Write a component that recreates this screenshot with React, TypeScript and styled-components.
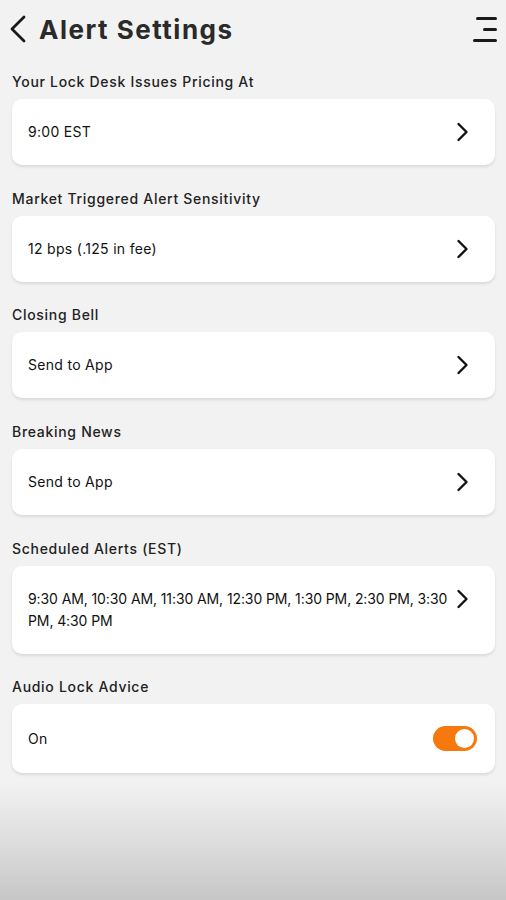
import { useState } from "react";
import styled, { createGlobalStyle } from "styled-components";

const GlobalStyle = createGlobalStyle`
    html, body {
        margin: 0;
        padding: 0;
        background: #f2f2f2;
    }
    body {
        font-family: Inter, "Noto Sans", sans-serif;
        color: #111;
    }
    * {
        box-sizing: border-box;
    }
`;

const Screen = styled.div`
    width: 100%;
    min-height: 100vh;
    display: flex;
    flex-direction: column;
    background: #f2f2f2;
`;

const Header = styled.header`
    display: flex;
    align-items: center;
    justify-content: space-between;
    height: 58px;
    padding: 0 9px 0 9px;
`;

const TitleGroup = styled.div`
    display: flex;
    align-items: center;
    gap: 12px;
`;

const BackButton = styled.button`
    display: flex;
    align-items: center;
    background: none;
    border: none;
    padding: 0;
    cursor: pointer;
`;

const Title = styled.h1`
    margin: 0;
    font-size: 26px;
    font-weight: 700;
    color: #2a2a2a;
    letter-spacing: 1.5px;
`;

const MenuButton = styled.button`
    display: flex;
    flex-direction: column;
    align-items: flex-end;
    gap: 8px;
    background: none;
    border: none;
    padding: 0;
    cursor: pointer;
`;

const MenuLine = styled.span<{ $w: number }>`
    display: block;
    width: ${(p) => p.$w}px;
    height: 3px;
    border-radius: 2px;
    background: #1a1a1a;
`;

const List = styled.main`
    display: flex;
    flex-direction: column;
    gap: 23.7px;
    padding: 14px 11px 0 12px;
`;

const Section = styled.section`
    display: flex;
    flex-direction: column;
    gap: 7px;
`;

const Label = styled.div`
    font-size: 14px;
    font-weight: 500;
    line-height: 20px;
    letter-spacing: 0.7px;
    color: #222;
`;

const Card = styled.div<{ $center?: boolean }>`
    display: flex;
    align-items: ${(p) => (p.$center ? "center" : "flex-start")};
    justify-content: space-between;
    gap: 6px;
    min-height: 66px;
    padding: 22px 26px 22px 16px;
    background: #fff;
    border-radius: 10px;
    box-shadow: 0 2px 3px rgba(0, 0, 0, 0.1);
`;

const Value = styled.div<{ $spacing?: number }>`
    font-size: 14px;
    line-height: 22px;
    letter-spacing: ${(p) => p.$spacing ?? 0.3}px;
    color: #111;
`;

const Chevron = styled.svg`
    flex-shrink: 0;
    margin-top: 1px;
`;

const Toggle = styled.button<{ $on: boolean }>`
    position: relative;
    width: 44px;
    height: 25px;
    margin-right: -8px;
    border: none;
    border-radius: 13px;
    padding: 0;
    background: ${(p) => (p.$on ? "#f7780c" : "#ccc")};
    cursor: pointer;
`;

const Knob = styled.span<{ $on: boolean }>`
    position: absolute;
    top: 3px;
    left: ${(p) => (p.$on ? "22px" : "3px")};
    width: 19px;
    height: 19px;
    border-radius: 50%;
    background: #fff;
`;

const Fade = styled.div`
    flex: 1;
    min-height: 120px;
    margin-top: 8px;
    background: linear-gradient(to bottom, #f2f2f2 0%, #e0e0e0 45%, #c6c6c6 100%);
`;

const ChevronRight = () => (
    <Chevron width="13" height="20" viewBox="0 0 13 20">
        <path d="M2.5 2 L10.5 10 L2.5 18" fill="none" stroke="#111" strokeWidth="2.4" strokeLinecap="round" strokeLinejoin="round" />
    </Chevron>
);

const settings = [
    { label: "Your Lock Desk Issues Pricing At", value: "9:00 EST" },
    { label: "Market Triggered Alert Sensitivity", value: "12 bps (.125 in fee)" },
    { label: "Closing Bell", value: "Send to App" },
    { label: "Breaking News", value: "Send to App" },
    {
        label: "Scheduled Alerts (EST)",
        value: "9:30 AM, 10:30 AM, 11:30 AM, 12:30 PM, 1:30 PM, 2:30 PM, 3:30 PM, 4:30 PM",
        spacing: -0.1,
    },
];

const App = () => {
    const [audio, setAudio] = useState(true);

    return (
        <Screen>
            <GlobalStyle />
            <Header>
                <TitleGroup>
                    <BackButton aria-label="Back">
                        <svg width="18" height="28" viewBox="0 0 18 28">
                            <path d="M15 2 L3 14 L15 26" fill="none" stroke="#1a1a1a" strokeWidth="2.8" strokeLinecap="round" strokeLinejoin="round" />
                        </svg>
                    </BackButton>
                    <Title>Alert Settings</Title>
                </TitleGroup>
                <MenuButton aria-label="Menu">
                    <MenuLine $w={21} />
                    <MenuLine $w={14} />
                    <MenuLine $w={24} />
                </MenuButton>
            </Header>
            <List>
                {settings.map((s) => (
                    <Section key={s.label}>
                        <Label>{s.label}</Label>
                        <Card>
                            <Value $spacing={s.spacing}>{s.value}</Value>
                            <ChevronRight />
                        </Card>
                    </Section>
                ))}
                <Section>
                    <Label>Audio Lock Advice</Label>
                    <Card $center>
                        <Value>On</Value>
                        <Toggle $on={audio} onClick={() => setAudio(!audio)} aria-label="Audio Lock Advice">
                            <Knob $on={audio} />
                        </Toggle>
                    </Card>
                </Section>
            </List>
            <Fade />
        </Screen>
    );
};

export default App;
